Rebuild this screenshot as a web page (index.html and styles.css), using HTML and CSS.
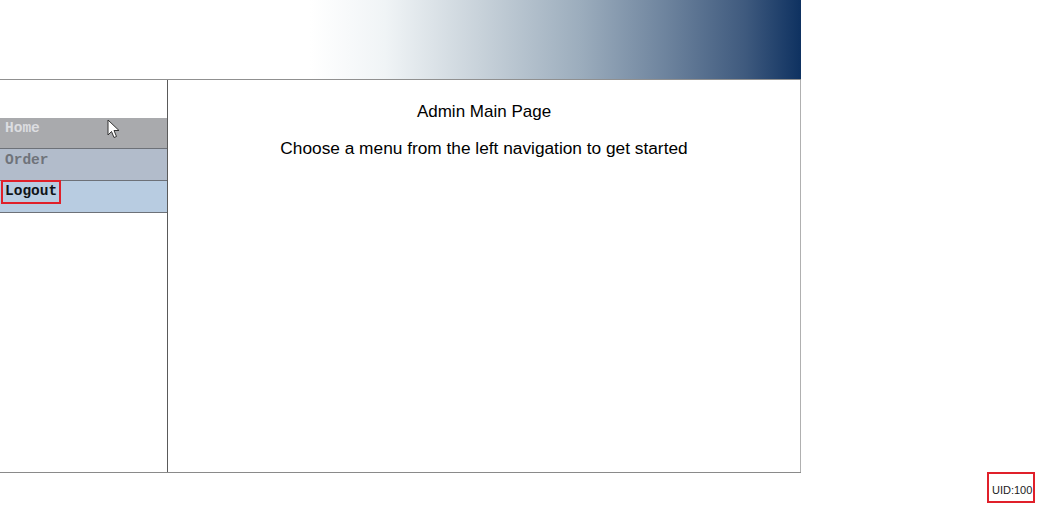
FILE: index.html
```html
<!DOCTYPE html>
<html>
<head>
<meta charset="utf-8">
<link rel="stylesheet" href="styles.css">
</head>
<body>
<div class="frame">
  <div class="header"></div>
  <div class="body-row">
    <nav class="nav">
      <ul class="menu">
        <li class="item home">Home</li>
        <li class="item order">Order</li>
        <li class="item logout"><span class="focus">Logout</span></li>
      </ul>
    </nav>
    <main class="main">
      <h1 class="title">Admin Main Page</h1>
      <p class="intro">Choose a menu from the left navigation to get started</p>
    </main>
  </div>
</div>
<div class="uid">UID:100</div>
<svg class="cursor" width="14" height="22" viewBox="0 0 14 22"><path d="M1 1 L1 16 L4.5 12.5 L7 18.5 L9.5 17.5 L7 11.5 L12 11.5 Z" fill="#fff" stroke="#333" stroke-width="1"/></svg>
</body>
</html>
```
FILE: styles.css
```css
html, body { margin: 0; padding: 0; background: #fff; }
body { font-family: "Liberation Sans", Arial, sans-serif; width: 1037px; height: 512px; position: relative; overflow: hidden; }
.frame { width: 801px; }
.header {
  height: 79px;
  border-bottom: 1px solid #909090;
  background: linear-gradient(to right, #fff 0px, #fff 310px, #f0f4f6 385px, #c8d2da 480px, #9cadbd 580px, #6e849e 665px, #3f5a7e 745px, #0f3261 800px);
}
.body-row { display: flex; height: 392px; border-bottom: 1px solid #8a8a8a; }
.nav { width: 167px; border-right: 1px solid #5a5a5a; padding-top: 38px; box-sizing: content-box; }
.menu { list-style: none; margin: 0; padding: 0; }
.item {
  height: 31px;
  box-sizing: border-box;
  border-bottom: 1px solid #6d7178;
  font-family: "Liberation Mono", "Courier New", monospace;
  font-weight: bold;
  font-size: 14.5px;
  padding: 2px 0 0 5px;
  line-height: 16px;
}
.home { background: #a9aaad; color: #dcdde0; height: 31px; }
.order { background: #b2bccb; color: #6f737a; height: 32px; padding-top: 3px; }
.logout { background: #b8cce1; color: #101418; height: 32px; padding: 0 0 0 1px; }
.focus { display: inline-block; border: 2px solid #e0202a; padding: 1px 2px 3px 2px; margin-top: -1px; }
.main { flex: 1; border-right: 1px solid #b0b0b0; text-align: center; }
.title { font-size: 17px; font-weight: normal; margin: 21px 0 0; line-height: 22px; }
.intro { font-size: 17.3px; margin: 14px 0 0; line-height: 22px; }
.uid {
  position: absolute; left: 987px; top: 472px; width: 48px; height: 31px;
  box-sizing: border-box; border: 2px solid #e0202a;
  font-size: 11px; color: #222; line-height: 11px; padding: 11px 0 0 3px;
}
.cursor { position: absolute; left: 107px; top: 119px; }
```
